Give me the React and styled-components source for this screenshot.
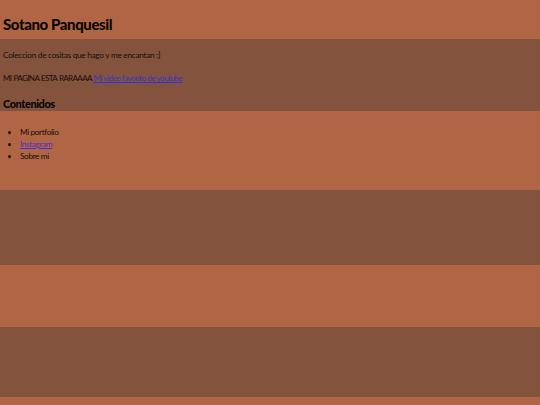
import React from "react";
import styled, { createGlobalStyle } from "styled-components";

const ORANGE = "#b06644";
const BROWN = "#84533d";

const GlobalStyle = createGlobalStyle`
  html, body { margin: 0; padding: 0; }
  body {
    background: ${ORANGE};
    color: #150e0a;
    font-family: Lato, "Open Sans", sans-serif;
  }
`;

const Page = styled.div`
  display: flex;
  flex-direction: column;
  min-height: 405px;
`;

const Band = styled.section`
  background: ${p => (p.$tone === "dark" ? BROWN : ORANGE)};
  height: ${p => p.$h}px;
  padding: ${p => p.$pad || "0 3px"};
  box-sizing: border-box;
  flex-shrink: 0;
`;

const Title = styled.h1`
  margin: 0;
  padding-top: 17px;
  font-size: 15px;
  line-height: 15px;
  font-weight: 900;
  letter-spacing: -0.4px;
  color: #0a0604;
`;

const Text = styled.p`
  margin: 0 0 ${p => p.$mb || 0}px;
  font-size: ${p => p.$fs || 8.3}px;
  line-height: 12px;
  letter-spacing: ${p => p.$ls || -0.3}px;
  white-space: nowrap;
`;

const Caps = styled.span`
  letter-spacing: -0.6px;
  word-spacing: 0.6px;
`;

const Link = styled.a`
  color: ${p => p.$c || "#3232d6"};
  text-decoration: underline;
`;

const Subtitle = styled.h2`
  margin: 0;
  font-size: 11px;
  line-height: 13px;
  font-weight: 900;
  letter-spacing: -0.45px;
  color: #0a0604;
`;

const List = styled.ul`
  margin: 0;
  padding: 15px 0 0 17px;
  list-style: disc;
`;

const Item = styled.li`
  font-size: 8.3px;
  line-height: 12px;
  letter-spacing: -0.4px;
  white-space: nowrap;
`;

export default function App() {
  return (
    <>
      <GlobalStyle />
      <Page>
        <Band $h={39}>
          <Title>Sotano Panquesil</Title>
        </Band>
        <Band $tone="dark" $h={72} $pad="10px 3px 0">
          <Text $mb={11}>Coleccion de cositas que hago y me encantan :]</Text>
          <Text $mb={13} $fs={8} $ls={-0.45}>
            <Caps>MI PAGINA ESTA RARAAAA</Caps> <Link href="#">Mi video favorito de youtube</Link>
          </Text>
          <Subtitle>Contenidos</Subtitle>
        </Band>
        <Band $h={79} $pad="0 3px">
          <List>
            <Item>Mi portfolio</Item>
            <Item>
              <Link href="#" $c="#4a2fd8">Instagram</Link>
            </Item>
            <Item>Sobre mi</Item>
          </List>
        </Band>
        <Band $tone="dark" $h={75} />
        <Band $h={62} />
        <Band $tone="dark" $h={70} />
        <Band $h={8} />
      </Page>
    </>
  );
}
